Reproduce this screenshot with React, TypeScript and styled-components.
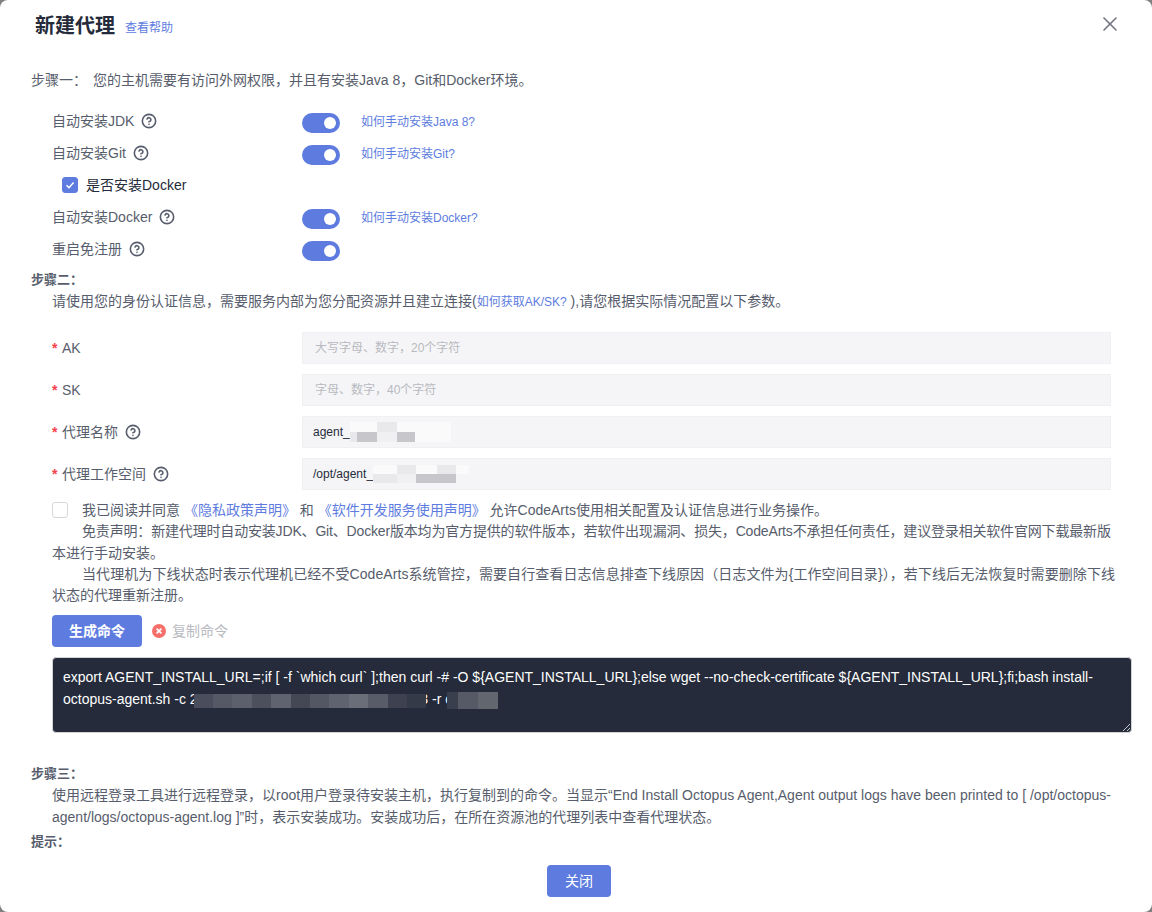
import React from "react";
import styled, {createGlobalStyle} from "styled-components";
import {CircleHelp, X} from "lucide-react";

const GlobalStyle = createGlobalStyle`
	html, body {
		margin: 0;
		padding: 0;
		background: #808080;
	}
	* {
		box-sizing: border-box;
	}
`;

const L1 = "#fafafb";
const L2 = "#e9e9eb";
const L3 = "#f0f0f2";
const G1 = "#c6c6cb";

type MosaicProps = {cols: string; rows: string[][]; cell: number; before?: number; after?: number};

const Mosaic = ({cols, rows, cell, before = 0, after = 0}: MosaicProps) => (
	<MosaicGrid $cols={cols} $cell={cell} $before={before} $after={after}>
		{rows.flat().map((c, i) => (
			<MosaicCell key={i} $c={c} />
		))}
	</MosaicGrid>
);

const Help = () => (
	<HelpIcon>
		<CircleHelp size={16} strokeWidth={2.4} />
	</HelpIcon>
);

const ToggleRow = ({label, link}: {label: string; link?: string}) => (
	<Row>
		<RowLabel>
			{label}
			<Help />
		</RowLabel>
		<Switch />
		{link && <RowLink>{link}</RowLink>}
	</Row>
);

const Field = ({label, help, placeholder, children}: {label: string; help?: boolean; placeholder?: string; children?: React.ReactNode}) => (
	<FieldRow>
		<FieldLabel>
			<Star>*</Star>
			{label}
			{help && <Help />}
		</FieldLabel>
		<Input>{placeholder ? <Placeholder>{placeholder}</Placeholder> : children}</Input>
	</FieldRow>
);

export default function App() {
	return (
		<>
			<GlobalStyle />
			<Dialog>
				<Header>
					<Title>新建代理</Title>
					<HeaderLink>查看帮助</HeaderLink>
					<Close>
						<X size={24} strokeWidth={1.6} />
					</Close>
				</Header>

				<StepOne>
					<span>步骤一：</span>
					<span>您的主机需要有访问外网权限，并且有安装Java 8，Git和Docker环境。</span>
				</StepOne>

				<Rows>
					<ToggleRow label="自动安装JDK" link="如何手动安装Java 8?" />
					<ToggleRow label="自动安装Git" link="如何手动安装Git?" />
					<CheckRow>
						<CheckBox $on>
							<svg width="12" height="12" viewBox="0 0 12 12" fill="none">
								<path d="M2.5 6.2 5 8.7 9.6 3.6" stroke="#fff" strokeWidth="1.5" />
							</svg>
						</CheckBox>
						是否安装Docker
					</CheckRow>
					<ToggleRow label="自动安装Docker" link="如何手动安装Docker?" />
					<ToggleRow label="重启免注册" />
				</Rows>

				<StepTitle>步骤二：</StepTitle>
				<StepText>
					请使用您的身份认证信息，需要服务内部为您分配资源并且建立连接(<SmallLink>如何获取AK/SK?</SmallLink>&nbsp;),请您根据实际情况配置以下参数。
				</StepText>

				<Fields>
					<Field label="AK" placeholder="大写字母、数字，20个字符" />
					<Field label="SK" placeholder="字母、数字，40个字符" />
					<Field label="代理名称" help>
						agent_
						<Mosaic
							cell={10}
							cols="7px 20px 20px 18px 36px"
							rows={[
								[L1, L1, L2, L1, L1],
								[L2, G1, L3, G1, L1],
							]}
						/>
					</Field>
					<Field label="代理工作空间" help>
						/opt/agent_
						<Mosaic
							cell={9}
							cols="6px 18px 19px 21px 19px 13px"
							rows={[
								[L1, L1, L2, L1, L2, L1],
								[L2, L2, L3, G1, G1, "transparent"],
							]}
						/>
					</Field>
				</Fields>

				<Terms>
					<TermsCheck />
					<Line $indent>
						我已阅读并同意 <TermLink>《隐私政策声明》</TermLink> 和 <TermLink>《软件开发服务使用声明》</TermLink> 允许CodeArts使用相关配置及认证信息进行业务操作。
					</Line>
					<Line $indent $tracking={-0.17}>
						免责声明：新建代理时自动安装JDK、Git、Docker版本均为官方提供的软件版本，若软件出现漏洞、损失，CodeArts不承担任何责任，建议登录相关软件官网下载最新版
					</Line>
					<Line>本进行手动安装。</Line>
					<Line $indent $tracking={0.08}>
						当代理机为下线状态时表示代理机已经不受CodeArts系统管控，需要自行查看日志信息排查下线原因（日志文件为{"{工作空间目录}"}），若下线后无法恢复时需要删除下线
					</Line>
					<Line>状态的代理重新注册。</Line>
				</Terms>

				<Actions>
					<PrimaryButton>生成命令</PrimaryButton>
					<CopyState>
						<svg width="14" height="14" viewBox="0 0 14 14">
							<circle cx="7" cy="7" r="7" fill="#f66f6a" />
							<path d="M4.6 4.6 9.4 9.4M9.4 4.6 4.6 9.4" stroke="#fff" strokeWidth="1.8" />
						</svg>
						复制命令
					</CopyState>
				</Actions>

				<Command>
					export AGENT_INSTALL_URL=;if [ -f `which curl` ];then curl -# -O ${"{AGENT_INSTALL_URL}"};else wget --no-check-certificate ${"{AGENT_INSTALL_URL}"};fi;bash install-octopus-agent.sh -c 2
					<Mosaic
						before={-4}
						after={-6}
						cell={14}
						cols="repeat(12, 19.4px)"
						rows={[["#4a4e5c", "#555965", "#5c606c", "#4b505c", "#5f636f", "#444854", "#535763", "#5f636f", "#6a6e79", "#585c68", "#3e4250", "#353a49"]]}
					/>
					3 -r c
					<Mosaic before={-5} cell={17} cols="11px 20px 20px" rows={[["#3a3f4d", "#565a67", "#62666f"]]} />
					<Grip viewBox="0 0 8 8">
						<path d="M1 8 8 1M5 8 8 5" stroke="#c8c8c8" strokeWidth="1" />
					</Grip>
				</Command>

				<StepThree>步骤三：</StepThree>
				<StepText>
					使用远程登录工具进行远程登录，以root用户登录待安装主机，执行复制到的命令。当显示“End Install Octopus Agent,Agent output logs have been printed to [ /opt/octopus-agent/logs/octopus-agent.log ]”时，表示安装成功。安装成功后，在所在资源池的代理列表中查看代理状态。
				</StepText>
				<StepTitle $top={3}>提示：</StepTitle>

				<Footer>
					<CloseButton>关闭</CloseButton>
				</Footer>
			</Dialog>
		</>
	);
}

const Dialog = styled.div`
	width: 1152px;
	height: 912px;
	background: #fff;
	border-radius: 8px;
	overflow: hidden;
	display: flex;
	flex-direction: column;
	padding: 0 20px 0 32px;
	color: #575d6c;
	font-family: "Liberation Sans", "Noto Sans CJK SC", sans-serif;
	font-size: 14px;
	line-height: 22px;
`;

const Header = styled.div`
	height: 52px;
	display: flex;
	align-items: center;
	margin-left: 3px;
	position: relative;
`;

const Title = styled.h1`
	margin: 0;
	font-size: 20px;
	font-weight: 700;
	color: #252b3a;
`;

const HeaderLink = styled.a`
	margin-left: 10px;
	margin-top: 3px;
	font-size: 12px;
	color: #5e7ce0;
`;

const Close = styled.span`
	position: absolute;
	right: 10px;
	top: 12px;
	display: flex;
	color: #71757f;
`;

const StepOne = styled.div`
	margin-top: 17px;
	margin-left: -1px;
	display: flex;
	gap: 6px;
`;

const Rows = styled.div`
	margin-top: 14px;
	padding-left: 20px;
	display: flex;
	flex-direction: column;
`;

const Row = styled.div`
	height: 32px;
	display: flex;
	align-items: center;
`;

const RowLabel = styled.div`
	width: 250px;
	display: flex;
	align-items: center;
`;

const HelpIcon = styled.span`
	display: inline-flex;
	margin-left: 7px;
	color: #575d6c;
`;

const Switch = styled.span`
	width: 38px;
	height: 20px;
	margin-top: 3px;
	border-radius: 10px;
	background: #5e7ce0;
	position: relative;

	&::after {
		content: "";
		position: absolute;
		right: 4px;
		top: 4px;
		width: 12px;
		height: 12px;
		border-radius: 50%;
		background: #fff;
	}
`;

const RowLink = styled.a`
	margin: 1px 0 0 21px;
	font-size: 12px;
	color: #5e7ce0;
`;

const CheckRow = styled.div`
	height: 32px;
	display: flex;
	align-items: center;
	gap: 8px;
	padding-left: 10px;
	color: #252b3a;
`;

const CheckBox = styled.span<{$on?: boolean}>`
	width: 16px;
	height: 16px;
	border-radius: 3px;
	display: flex;
	align-items: center;
	justify-content: center;
	background: ${(p) => (p.$on ? "#5e7ce0" : "#fff")};
	border: 1px solid ${(p) => (p.$on ? "#5e7ce0" : "#d7d8da")};
`;

const StepTitle = styled.div<{$top?: number}>`
	margin-top: ${(p) => p.$top ?? 4}px;
	margin-left: -1px;
	font-size: 13px;
	font-weight: 700;
	color: #575d6c;
`;

const StepThree = styled(StepTitle)`
	margin-top: 30px;
`;

const StepText = styled.div`
	margin-top: -1px;
	padding-left: 20px;
	width: 1080px;
`;

const SmallLink = styled.a`
	font-size: 12px;
	color: #5e7ce0;
`;

const Fields = styled.div`
	margin-top: 19px;
	padding-left: 20px;
	display: flex;
	flex-direction: column;
	gap: 10px;
`;

const FieldRow = styled.div`
	display: flex;
	align-items: center;
`;

const FieldLabel = styled.div`
	width: 250px;
	display: flex;
	align-items: center;
`;

const Star = styled.span`
	color: #f5414d;
	width: 10px;
	font-size: 14px;
	font-weight: 700;
`;

const Input = styled.div`
	width: 809px;
	height: 32px;
	background: #f5f5f7;
	border: 1px solid #f0f0f3;
	padding: 0 10px;
	display: flex;
	align-items: center;
	font-size: 12px;
	color: #252b3a;
`;

const Placeholder = styled.span`
	color: #b8bac0;
	margin-left: 2px;
`;

const MosaicGrid = styled.span<{$cols: string; $cell: number; $before: number; $after: number}>`
	display: inline-grid;
	grid-template-columns: ${(p) => p.$cols};
	grid-auto-rows: ${(p) => p.$cell}px;
	margin: 0 ${(p) => p.$after}px 0 ${(p) => p.$before}px;
	vertical-align: middle;
	position: relative;
`;

const MosaicCell = styled.span<{$c: string}>`
	background: ${(p) => p.$c};
`;

const Terms = styled.div`
	margin-top: 10px;
	padding-left: 20px;
	line-height: 21.3px;
	position: relative;
`;

const Line = styled.div<{$indent?: boolean; $tracking?: number}>`
	white-space: nowrap;
	padding-left: ${(p) => (p.$indent ? 30 : 0)}px;
	letter-spacing: ${(p) => p.$tracking ?? 0}px;
`;

const TermsCheck = styled.span`
	position: absolute;
	left: 20px;
	top: 2px;
	width: 16px;
	height: 16px;
	border-radius: 3px;
	border: 1px solid #d7d8da;
	background: #fff;
`;

const TermLink = styled.a`
	color: #5e7ce0;
`;

const Actions = styled.div`
	margin-top: 9px;
	padding-left: 20px;
	display: flex;
	align-items: center;
	gap: 10px;
`;

const PrimaryButton = styled.button`
	width: 90px;
	height: 32px;
	border: 0;
	border-radius: 4px;
	background: #5e7ce0;
	color: #fff;
	font: inherit;
	font-weight: 700;
`;

const CopyState = styled.span`
	display: flex;
	align-items: center;
	gap: 6px;
	color: #b8bac0;
`;

const Command = styled.div`
	margin: 10px 0 0 20px;
	width: 1080px;
	height: 76px;
	padding: 8px 10px;
	background: #252b3a;
	border: 1px solid #d2d3d6;
	border-radius: 4px;
	color: #fff;
	position: relative;
`;

const Grip = styled.svg`
	position: absolute;
	right: 1px;
	bottom: 1px;
	width: 8px;
	height: 8px;
`;

const Footer = styled.div`
	margin-top: auto;
	margin-left: -32px;
	width: 1152px;
	padding: 0 0 15px 6px;
	display: flex;
	justify-content: center;
`;

const CloseButton = styled.button`
	width: 64px;
	height: 32px;
	border: 0;
	border-radius: 4px;
	background: #5e7ce0;
	color: #fff;
	font: inherit;
`;
